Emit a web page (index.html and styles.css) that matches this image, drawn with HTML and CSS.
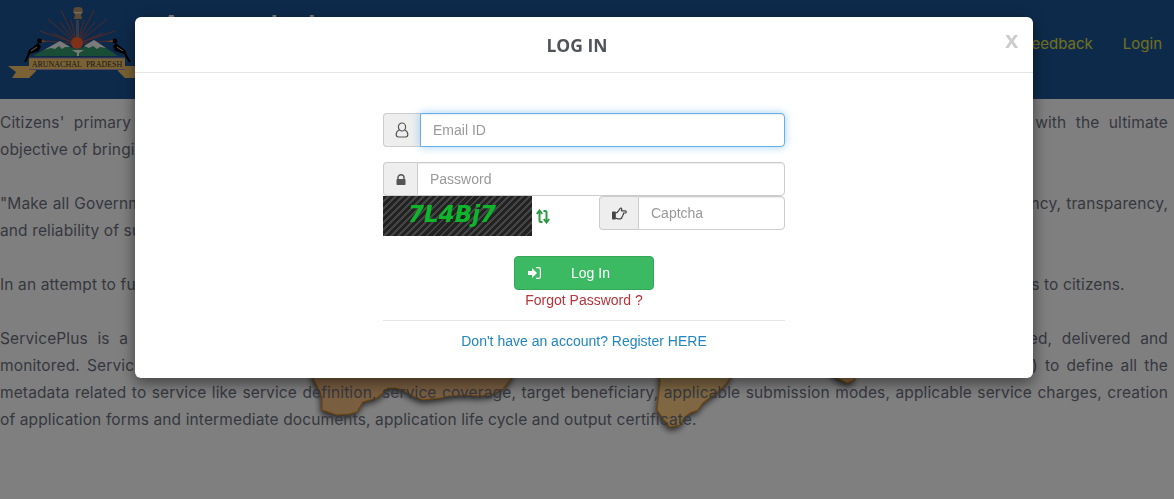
FILE: index.html
```html
<!DOCTYPE html>
<html lang="en">

<head>
    <meta charset="UTF-8">
    <meta name="viewport" content="width=device-width, initial-scale=1.0">
    <title>ServicePlus - Log In</title>
    <link rel="stylesheet" href="styles.css">
</head>

<body>
    <div class="header">
        <svg class="logo" viewBox="8 6 130 74" width="130" height="74">
            <!-- rays -->
            <g stroke="#e0502c" stroke-width="0.7">
                <line x1="77" y1="44" x2="61" y2="10" />
                <line x1="77" y1="44" x2="94" y2="10" />
                <line x1="77" y1="44" x2="48" y2="19" />
                <line x1="77" y1="44" x2="107" y2="19" />
                <line x1="77" y1="44" x2="40" y2="31" />
                <line x1="77" y1="44" x2="115" y2="31" />
                <line x1="77" y1="44" x2="60" y2="22" />
                <line x1="77" y1="44" x2="95" y2="22" />
                <line x1="77" y1="44" x2="52" y2="33" />
                <line x1="77" y1="44" x2="103" y2="33" />
                <line x1="77" y1="44" x2="47" y2="41" />
                <line x1="77" y1="44" x2="108" y2="41" />
                <line x1="77" y1="44" x2="71" y2="20" />
                <line x1="77" y1="44" x2="84" y2="20" />
            </g>
            <!-- state emblem on top -->
            <rect x="76" y="20" width="3" height="18" fill="#6d7590" />
            <path d="M74 8 Q78 6 82 8 L83 12 L81 14 L82 19 H74 L75 14 L73 12 Z" fill="#b89468" />
            <rect x="74" y="12" width="8" height="1.5" fill="#f0d8b0" />
            <!-- sun -->
            <circle cx="77" cy="43" r="6" fill="#ff6030" />
            <!-- mountains -->
            <path d="M33 56 L60 41 L72 48 L77 49 L82 48 L94 40 L118 56 Z" fill="#349a6a" />
            <path d="M44 50 L60 41 L70 47 L65 47 L62 49 L59 46 L55 49 L51 48 Z" fill="#f6f6f6" />
            <path d="M84 46 L94 40 L106 48 L100 47 L97 49 L93 46 L89 48 Z" fill="#f6f6f6" />
            <path d="M72 50 H84 L79 53 V56 H77 V53 Z" fill="#f6f6f6" />
            <!-- hornbills -->
            <g>
                <path d="M41 40 L48 41.5 L41 42 Z" fill="#ff8a30" />
                <circle cx="39.5" cy="41" r="2.4" fill="#000" />
                <path d="M38 43 L41 46 L39 51 L33 53 L27 55 L29 50 L33 47 Z" fill="#000" />
                <path d="M29 54 L25 62" stroke="#000" stroke-width="2" />
                <path d="M31 51 L37 47" stroke="#fff" stroke-width="0.8" />
            </g>
            <g>
                <path d="M113 40 L106 41.5 L113 42 Z" fill="#ff8a30" />
                <circle cx="115" cy="41" r="2.4" fill="#000" />
                <path d="M116 43 L113 46 L115 51 L121 53 L127 55 L125 50 L121 47 Z" fill="#000" />
                <path d="M125 54 L130 62" stroke="#000" stroke-width="2" />
                <path d="M123 51 L117 47" stroke="#fff" stroke-width="0.8" />
            </g>
            <!-- ribbon -->
            <path d="M8 66 H36 V71 L29 78 H12 L16 72 Z" fill="#f4c468" />
            <path d="M146 66 H118 V71 L125 78 H142 L138 72 Z" fill="#f4c468" />
            <rect x="29" y="58" width="96" height="12" fill="#f4c468" />
            <path d="M29 58 H125 M29 69.5 H125" stroke="#9a8ac0" stroke-width="1.2" />
            <text class="logo-text" x="77" y="67" text-anchor="middle">ARUNACHAL&#160; PRADESH</text>
        </svg>
        <div class="site-title">Arunachal</div>
        <div class="top-links">
            <a class="top-link">Feedback</a>
            <a class="top-link">Login</a>
        </div>
    </div>

    <!-- map sits under the text -->
    <svg class="map" viewBox="0 0 1174 499" width="1174" height="499">
        <path class="map-west" d="M313 360 L313 378 L318 388 L322 397 L322 410 L337 415 L350 414 L357 412 L363 402 L370 400 L377 398 L383 393 L388 388 L396 388 L403 390 L413 396 L423 400 L440 398 L452 396 L463 395 L478 396 L490 395 L503 389 L512 378 L515 360 Z" />
        <path class="map-east" d="M660 360 L660 383 L658 400 L657 410 L664 420 L670 427 L680 425 L684 418 L690 413 L698 410 L703 403 L712 396 L720 390 L726 384 L730 378 L735 360 Z" />
        <path class="map-east" d="M820 360 L837 378 L847 383 L855 380 L853 375 L850 360 Z" />
    </svg>

    <div class="content">
        <p>
            <span class="ln">Citizens' primary interface with the Government is through the public services it offers, and this portal works to improve them with the ultimate</span>
            <span>objective of bringing better governance to every citizen.</span>
        </p>
        <p>
            <span class="ln">"Make all Government services accessible to the common man in his locality, through common service delivery outlets and ensure efficiency, transparency,</span>
            <span>and reliability of such services at affordable costs to realise the basic needs of the common man."</span>
        </p>
        <p>
            <span>In an attempt to fulfil this vision, the Government has taken up a number of initiatives aimed at delivering a range of online public e-services to citizens.</span>
        </p>
        <p>
            <span class="ln">ServicePlus is a state-of-the-art metadata based platform through which any public service can be defined, configured, designed, delivered and</span>
            <span class="ln">monitored. ServicePlus provides a simple and flexible interface to the service provider (State Department Administrator and Designer) to define all the</span>
            <span class="ln">metadata related to service like service definition, service coverage, target beneficiary, applicable submission modes, applicable service charges, creation</span>
            <span>of application forms and intermediate documents, application life cycle and output certificate.</span>
        </p>
    </div>

    <div class="overlay">
        <div class="modal">
            <div class="modal-header">
                <h4 class="modal-title">LOG IN</h4>
                <span class="close">x</span>
            </div>
            <form class="login-form">
                <div class="input-group mb">
                    <span class="addon addon-user">
                        <svg viewBox="0 0 14 16" width="14" height="16" fill="none" stroke="#555" stroke-width="1.2">
                            <ellipse cx="7" cy="5" rx="3.6" ry="4" />
                            <path d="M4.2 8 C2 9 1.2 10.5 1.2 12.6 C1.2 14.2 2.2 15 3.4 15 H10.6 C11.8 15 12.8 14.2 12.8 12.6 C12.8 10.5 12 9 9.8 8" />
                        </svg>
                    </span>
                    <input class="field field-focus" type="text" placeholder="Email ID">
                </div>
                <div class="input-group">
                    <span class="addon addon-lock">
                        <svg viewBox="0 0 10 11" width="10" height="11">
                            <path d="M2 5 V3.5 C2 1.8 3.3 0.7 5 0.7 C6.7 0.7 8 1.8 8 3.5 V5" fill="none" stroke="#555" stroke-width="1.4" />
                            <rect x="0.5" y="5" width="9" height="6" rx="0.8" fill="#555" />
                        </svg>
                    </span>
                    <input class="field" type="password" placeholder="Password">
                </div>
                <div class="captcha-row">
                    <div class="captcha-img">7L4Bj7</div>
                    <svg class="refresh" viewBox="0 0 14 15" width="14" height="15" fill="none" stroke="#2a9a40" stroke-width="2">
                        <path d="M3.5 3 V11.5 Q3.5 13 5 13 H6.5" />
                        <path d="M10.5 12 V3.5 Q10.5 2 9 2 H7.5" />
                        <path d="M0.8 5 L3.5 1.5 L6.2 5" />
                        <path d="M7.8 10 L10.5 13.5 L13.2 10" />
                    </svg>
                    <div class="input-group captcha-group">
                        <span class="addon addon-hand">
                            <svg viewBox="0 0 15 13" width="15" height="13" fill="none" stroke="#444" stroke-width="1.2" stroke-linejoin="round">
                                <rect x="0.6" y="5.2" width="2.6" height="6.6" fill="#444" />
                                <path d="M3.2 5.6 H5 L7.4 2.6 C7.9 1.8 8.2 1 8.9 1 C9.8 1 10 2.4 9.4 3.8 H13.2 C14.6 3.8 14.6 6 13.2 6 H11.4 C11.8 7 11.4 7.8 10.8 8 C11 8.8 10.6 9.6 10 9.8 C10 11 9.2 11.8 8.2 11.8 H6 C5 11.8 4.2 11.2 3.2 11" />
                            </svg>
                        </span>
                        <input class="field" type="text" placeholder="Captcha">
                    </div>
                </div>
                <button class="login-btn" type="button">
                    <svg class="btn-icon" viewBox="0 0 13 12" width="13" height="12" fill="#fff">
                        <path d="M0 4 H4 V1 L9 6 L4 11 V8 H0 Z" />
                        <path d="M8 0.7 H11 C12 0.7 12.4 1.4 12.4 2.2 V9.8 C12.4 10.6 12 11.3 11 11.3 H8" fill="none" stroke="#fff" stroke-width="1.2" />
                    </svg>
                    Log In
                </button>
                <a class="forgot">Forgot Password ?</a>
                <hr class="divider">
                <a class="register">Don't have an account? Register HERE</a>
            </form>
        </div>
    </div>
</body>

</html>
```

FILE: styles.css
```css
* {
    box-sizing: border-box;
}

body {
    margin: 0;
    padding: 0;
    width: 100%;
    height: 499px;
    overflow: hidden;
    background-color: #fff;
    font-family: Inter, "Liberation Sans", sans-serif;
}

.header {
    display: flex;
    align-items: flex-start;
    height: 99px;
    padding: 6px 12px 0 8px;
    background-color: #1c5496;
}

.logo-text {
    font-family: "Liberation Serif", serif;
    font-size: 8px;
    fill: #333;
}

.site-title {
    margin-left: 22px;
    margin-top: -2px;
    font-size: 32px;
    font-weight: 500;
    line-height: 48px;
    color: #fff;
}

.top-links {
    display: flex;
    gap: 30px;
    margin-left: auto;
    padding-top: 27px;
}

.top-link {
    font-size: 15px;
    line-height: 22px;
    color: #e0e040;
}

.map {
    position: absolute;
    left: 0;
    top: 0;
    filter: drop-shadow(-1px 3px 3px rgba(0, 0, 0, 0.7));
}

.map-west {
    fill: #f2bc80;
    stroke: #d8871c;
    stroke-width: 1.2;
}

.map-east {
    fill: #fcce84;
    stroke: #e08a1c;
    stroke-width: 1.2;
}

.content {
    position: relative;
    z-index: 1;
    width: 1168px;
    padding-top: 10px;
    font-size: 15.5px;
    letter-spacing: 0.13px;
    line-height: 27px;
    color: #6c7080;
}

.content p {
    margin: 0 0 27px 0;
}

.content span {
    display: block;
}

.content .ln {
    text-align: justify;
    text-align-last: justify;
}

.overlay {
    position: fixed;
    left: 0;
    top: 0;
    right: 0;
    bottom: 0;
    z-index: 5;
    background-color: rgba(0, 0, 0, 0.5);
}

.modal {
    width: 898px;
    height: 361px;
    margin: 17px 0 0 135px;
    background-color: #fff;
    border-radius: 6px;
    box-shadow: 0 5px 15px rgba(0, 0, 0, 0.5);
    font-family: "Liberation Sans", sans-serif;
    font-size: 14px;
}

.modal-header {
    display: flex;
    align-items: center;
    justify-content: center;
    height: 56px;
    padding-right: 14px;
    border-bottom: 1px solid #e5e5e5;
}

.modal-title {
    margin: 0;
    font-family: "Open Sans", sans-serif;
    font-size: 17.5px;
    font-weight: 700;
    color: #50545a;
}

.close {
    position: absolute;
    left: 1005px;
    top: 27px;
    font-size: 24px;
    font-weight: bold;
    line-height: 26px;
    color: #ccc;
}

.login-form {
    display: flex;
    flex-direction: column;
    align-items: center;
    width: 402px;
    margin: 0 auto;
    padding-top: 40px;
}

.input-group {
    display: flex;
    width: 100%;
    height: 34px;
}

.mb {
    margin-bottom: 15px;
}

.addon {
    display: flex;
    align-items: center;
    justify-content: center;
    flex-shrink: 0;
    width: 34px;
    background-color: #eee;
    border: 1px solid #ccc;
    border-right: none;
    border-radius: 4px 0 0 4px;
}

.addon-user {
    width: 37px;
}

.addon-hand {
    width: 39px;
}

.field {
    flex: 1;
    min-width: 0;
    height: 34px;
    padding: 6px 12px;
    border: 1px solid #ccc;
    border-radius: 0 4px 4px 0;
    font-family: "Liberation Sans", sans-serif;
    font-size: 14px;
    color: #555;
    outline: none;
    box-shadow: inset 0 1px 1px rgba(0, 0, 0, 0.075);
}

.field::placeholder {
    color: #999;
}

.field-focus {
    border-color: #66afe9;
    box-shadow: inset 0 1px 1px rgba(0, 0, 0, 0.075), 0 0 8px rgba(102, 175, 233, 0.6);
}

.captcha-row {
    display: flex;
    align-items: flex-start;
    width: 100%;
    height: 40px;
}

.captcha-img {
    flex-shrink: 0;
    width: 149px;
    height: 40px;
    padding: 3px 0 0 25px;
    background: repeating-linear-gradient(135deg, #222 0, #222 3px, #454545 3px, #454545 5px);
    font-family: "DejaVu Sans", sans-serif;
    font-size: 23px;
    font-style: italic;
    font-weight: bold;
    line-height: 30px;
    color: #0db52a;
}

.refresh {
    margin: 13px 0 0 4px;
    flex-shrink: 0;
}

.captcha-group {
    width: 186px;
    margin-left: auto;
}

.login-btn {
    display: flex;
    align-items: center;
    width: 140px;
    height: 34px;
    margin-top: 20px;
    padding: 0 0 0 13px;
    background-color: #3cb963;
    border: 1px solid #34a858;
    border-radius: 4px;
    font-family: "Liberation Sans", sans-serif;
    font-size: 14px;
    color: #fff;
}

.btn-icon {
    margin-right: 30px;
}

.forgot {
    line-height: 20px;
    color: #b5333a;
}

.divider {
    width: 100%;
    margin: 10px 0;
    border: none;
    border-top: 1px solid #e5e5e5;
}

.register {
    line-height: 20px;
    color: #2285c4;
}
```
